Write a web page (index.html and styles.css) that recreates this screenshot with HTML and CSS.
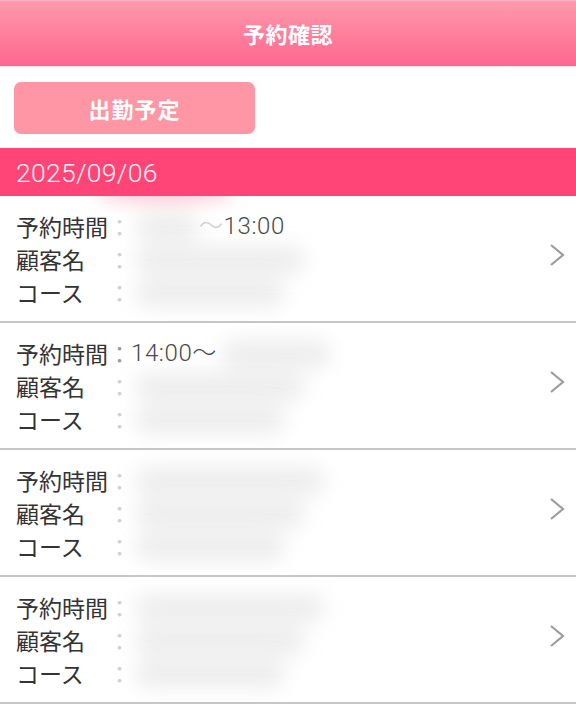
FILE: index.html
```html
<!DOCTYPE html>
<html lang="ja">
<head>
<meta charset="utf-8">
<title>予約確認</title>
<link rel="stylesheet" href="styles.css">
</head>
<body>
<header class="topbar"><h1 class="title">予約確認</h1></header>
<div class="toolbar"><button class="btn-shift" type="button">出勤予定</button></div>
<div class="date-bar">2025/09/06</div>
<ul class="list">
  <li class="item">
    <span class="smudge"></span>
    <div class="info">
      <div class="line"><span class="label">予約時間</span><span class="sep faint">：</span><span class="masked w80" aria-hidden="true"></span><span class="val"><span class="faint">～</span>13:00</span></div>
      <div class="line"><span class="label">顧客名</span><span class="sep faint">：</span><span class="masked w170" aria-hidden="true"></span></div>
      <div class="line"><span class="label">コース</span><span class="sep faint">：</span><span class="masked w150" aria-hidden="true"></span></div>
    </div>
    <svg class="chev" width="16" height="24" viewBox="0 0 16 24"><polyline points="2,2 14,12 2,22" fill="none" stroke="#9c9c9c" stroke-width="2.2"/></svg>
  </li>
  <li class="item">
    <div class="info">
      <div class="line"><span class="label">予約時間</span><span class="sep">：</span><span class="val">14:00～</span><span class="masked w110" aria-hidden="true"></span></div>
      <div class="line"><span class="label">顧客名</span><span class="sep faint">：</span><span class="masked w170" aria-hidden="true"></span></div>
      <div class="line"><span class="label">コース</span><span class="sep faint">：</span><span class="masked w150" aria-hidden="true"></span></div>
    </div>
    <svg class="chev" width="16" height="24" viewBox="0 0 16 24"><polyline points="2,2 14,12 2,22" fill="none" stroke="#9c9c9c" stroke-width="2.2"/></svg>
  </li>
  <li class="item">
    <div class="info">
      <div class="line"><span class="label">予約時間</span><span class="sep faint">：</span><span class="masked w190" aria-hidden="true"></span></div>
      <div class="line"><span class="label">顧客名</span><span class="sep faint">：</span><span class="masked w170" aria-hidden="true"></span></div>
      <div class="line"><span class="label">コース</span><span class="sep faint">：</span><span class="masked w150" aria-hidden="true"></span></div>
    </div>
    <svg class="chev" width="16" height="24" viewBox="0 0 16 24"><polyline points="2,2 14,12 2,22" fill="none" stroke="#9c9c9c" stroke-width="2.2"/></svg>
  </li>
  <li class="item">
    <div class="info">
      <div class="line"><span class="label">予約時間</span><span class="sep faint">：</span><span class="masked w190" aria-hidden="true"></span></div>
      <div class="line"><span class="label">顧客名</span><span class="sep faint">：</span><span class="masked w170" aria-hidden="true"></span></div>
      <div class="line"><span class="label">コース</span><span class="sep faint">：</span><span class="masked w150" aria-hidden="true"></span></div>
    </div>
    <svg class="chev" width="16" height="24" viewBox="0 0 16 24"><polyline points="2,2 14,12 2,22" fill="none" stroke="#9c9c9c" stroke-width="2.2"/></svg>
  </li>
</ul>
</body>
</html>
```
FILE: styles.css
```css
html, body {
  margin: 0;
  padding: 0;
  background: #ffffff;
}
body {
  font-family: "Noto Sans CJK JP", "Noto Sans", sans-serif;
  color: #333333;
  width: 576px;
  overflow: hidden;
}
.topbar {
  height: 66px;
  box-sizing: border-box;
  border-top: 1px solid #f4b3c0;
  background: linear-gradient(to bottom, #fe9aab 0%, #fe809c 50%, #fe6690 100%);
  display: flex;
  align-items: center;
  justify-content: center;
}
.title {
  margin: 0 0 2px;
  color: #ffffff;
  font-size: 22px;
  font-weight: 700;
  letter-spacing: 0.5px;
}
.toolbar {
  padding: 15px 14px 15px;
  height: 82px;
  box-sizing: border-box;
  border-top: 1px solid #fbe3e8;
}
.btn-shift {
  display: block;
  width: 241px;
  height: 52px;
  border: none;
  border-radius: 7px;
  background: #ff96a6;
  color: #ffffff;
  font-family: "Noto Sans CJK JP", sans-serif;
  font-size: 22px;
  font-weight: 700;
  letter-spacing: 1px;
  padding: 0;
}
.date-bar {
  height: 48px;
  box-sizing: border-box;
  background: #ff4577;
  color: #fff4f6;
  font-family: "Roboto", "Liberation Sans", sans-serif;
  font-weight: 300;
  font-size: 26.5px;
  letter-spacing: 0.3px;
  padding-left: 16px;
  display: flex;
  align-items: center;
}
.list {
  list-style: none;
  margin: 0;
  padding: 0;
}
.item {
  position: relative;
  height: 127px;
  box-sizing: border-box;
  border-bottom: 2px solid #c6c6c6;
  padding: 14px 11px 0 16px;
  display: flex;
  align-items: flex-start;
  justify-content: space-between;
  overflow: hidden;
}
.info {
  display: flex;
  flex-direction: column;
}
.line {
  display: flex;
  align-items: center;
  height: 33px;
  line-height: 33px;
  font-size: 23px;
  white-space: nowrap;
}
.label {
  display: inline-block;
  width: 92px;
  color: #333333;
}
.sep {
  display: inline-block;
  width: 23px;
  color: #9a9a9a;
}
.faint {
  color: #cfcfcf;
}
.val {
  font-family: "Roboto", "Noto Sans CJK JP", sans-serif;
  font-weight: 300;
  font-size: 24px;
  letter-spacing: 0.6px;
  color: #4a4a4a;
}
.masked {
  display: inline-block;
  height: 28px;
  background: rgba(150, 150, 150, 0.17);
  border-radius: 14px;
  filter: blur(10px);
  margin-left: 4px;
}
.w80 { width: 64px; }
.w110 { width: 110px; }
.w150 { width: 150px; }
.w170 { width: 170px; }
.w190 { width: 190px; }
.chev {
  flex: none;
  margin-top: 33px;
}
.smudge {
  position: absolute;
  left: 95px;
  top: -14px;
  width: 140px;
  height: 22px;
  border-radius: 50%;
  background: rgba(255, 120, 150, 0.35);
  filter: blur(8px);
}
```
